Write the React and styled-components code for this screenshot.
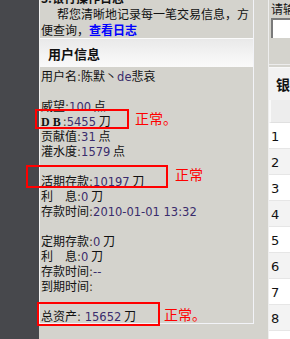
import styled, { createGlobalStyle } from "styled-components";

const GlobalStyle = createGlobalStyle`
  *, *::before, *::after {
    box-sizing: border-box;
  }
  html, body {
    margin: 0;
    padding: 0;
    background: #d4d3cd;
  }
  body {
    font-family: "DejaVu Sans", "Noto Sans CJK SC", sans-serif;
    font-size: 12px;
    color: #111;
  }
`;

const Page = styled.div`
  position: relative;
  display: flex;
  width: 290px;
  height: 339px;
  overflow: hidden;
  background: #d4d3cd;
`;

const Sidebar = styled.div`
  width: 39px;
  flex-shrink: 0;
  background: #47484c;
`;

const Main = styled.div`
  width: 215px;
  flex-shrink: 0;
  display: flex;
  flex-direction: column;
  border-left: 1px solid #f2f2f2;
  border-right: 1px solid #f2f3f8;
  align-self: flex-start;
`;

const Intro = styled.div`
  margin-top: -10px;
  padding-left: 1px;
  line-height: 16px;
`;

const IntroTitle = styled.div`
  font-weight: bold;
  font-family: "Noto Sans CJK SC", sans-serif;
`;

const IntroText = styled.div`
  text-indent: 16px;
  font-family: "Noto Sans CJK SC", sans-serif;
`;

const Link = styled.a`
  color: #0000ff;
  font-weight: bold;
  text-decoration: none;
`;

const Card = styled.div`
  border-top: 1px solid #fbfbfb;
  border-bottom: 1px solid #f2f3f8;
`;

const CardHeader = styled.div`
  height: 28px;
  display: flex;
  align-items: center;
  padding-left: 8px;
  background: linear-gradient(#e9e9e9, #f4f4f4 60%, #fafafa);
  font-family: "Noto Sans CJK SC", sans-serif;
  font-weight: bold;
  font-size: 13px;
  color: #111;
`;

const CardBody = styled.div`
  padding: 1px 0 0 1px;
`;

const Line = styled.div`
  height: 15px;
  line-height: 15px;
  white-space: nowrap;
  font-family: "Noto Sans CJK SC", sans-serif;
`;

const Value = styled.span`
  font-family: "DejaVu Sans", sans-serif;
  font-size: 11.5px;
  color: #3a2c6c;
`;

const Colon = styled.span`
  font-family: "DejaVu Sans", sans-serif;
  color: #4a3a1a;
`;

const Abbr = styled.span`
  font-family: "Liberation Serif", serif;
  font-weight: bold;
  font-size: 12px;
  margin-right: 2px;
`;

const Aside = styled.div`
  flex: 1;
  padding-left: 14px;
  display: flex;
  flex-direction: column;
`;

const AsideInner = styled.div`
  flex: 1;
  border-left: 1px solid #eeeeee;
  display: flex;
  flex-direction: column;
`;

const Search = styled.div`
  height: 65px;
  padding: 1px 0 0 2px;
  border-bottom: 1px solid #ececec;
  font-family: "Noto Sans CJK SC", sans-serif;
  white-space: nowrap;
  overflow: hidden;
`;

const SearchLabel = styled.div`
  line-height: 16px;
`;

const SearchInput = styled.div`
  margin-top: 1px;
  height: 20px;
  background: #fff;
  border-top: 2px solid #7a7a7a;
  border-left: 2px solid #7a7a7a;
`;

const Table = styled.div`
  margin-top: 2px;
  border-top: 1px solid #f8f8f8;
  background: #fff;
  flex: 1;
`;

const TableHead = styled.div`
  height: 32px;
  display: flex;
  align-items: center;
  padding-left: 7px;
  background: #f2f2f2;
  font-family: "Noto Sans CJK SC", sans-serif;
  font-weight: bold;
  font-size: 14px;
  white-space: nowrap;
  overflow: hidden;
`;

const SubHead = styled.div`
  height: 23px;
  background: #ededed;
  border-left: 2px solid #fafafa;
  border-bottom: 1px solid #e0e0e0;
`;

const Row = styled.div`
  height: 26px;
  display: flex;
  align-items: center;
  padding: 2px 0 0 2px;
  border-bottom: 1px solid #e6e6e6;
  background: ${({ $alt }) => ($alt ? "#f3f3f3" : "#ffffff")};
  font-family: "DejaVu Sans", sans-serif;
  font-size: 13px;
  color: #111;
`;

const Box = styled.div`
  position: absolute;
  border: 2px solid #ff0000;
`;

const Note = styled.div`
  position: absolute;
  color: #ff0000;
  font-family: "Noto Sans CJK SC", sans-serif;
  font-size: 14px;
  line-height: 16px;
  white-space: nowrap;
`;

const annotations = [
  { box: [35, 109, 94, 20], note: [135, 110], text: "正常。" },
  { box: [26, 165, 142, 23], note: [175, 166], text: "正常" },
  { box: [37, 302, 123, 24], note: [164, 306], text: "正常。" }
];

const Stat = ({ label, value, unit, children }) => (
  <Line>
    {children || label}
    <Colon>:</Colon>
    <Value>{value}</Value>
    {unit && <> {unit}</>}
  </Line>
);

export default function App() {
  return (
    <>
      <GlobalStyle />
      <Page>
        <Sidebar />
        <Main>
          <Intro>
            <IntroTitle>3.银行操作日志</IntroTitle>
            <IntroText>
              帮您清晰地记录每一笔交易信息，方便查询，<Link href="#">查看日志</Link>
            </IntroText>
          </Intro>
          <Card>
            <CardHeader>用户信息</CardHeader>
            <CardBody>
              <Line>
                用户名<Colon>:</Colon>陈默丶<Value>de</Value>悲哀
              </Line>
              <Line />
              <Stat label="威望" value="100" unit="点" />
              <Stat value="5455" unit="刀">
                <Abbr>D B</Abbr>
              </Stat>
              <Stat label="贡献值" value="31" unit="点" />
              <Stat label="灌水度" value="1579" unit="点" />
              <Line />
              <Stat label="活期存款" value="10197" unit="刀" />
              <Stat label="利　息" value="0" unit="刀" />
              <Stat label="存款时间" value="2010-01-01 13:32" />
              <Line />
              <Stat label="定期存款" value="0" unit="刀" />
              <Stat label="利　息" value="0" unit="刀" />
              <Stat label="存款时间" value="--" />
              <Stat label="到期时间" value="" />
              <Line />
              <Stat label="总资产" value=" 15652" unit="刀" />
            </CardBody>
          </Card>
        </Main>
        <Aside>
          <AsideInner>
            <Search>
              <SearchLabel>请输入银行卡号</SearchLabel>
              <SearchInput />
            </Search>
            <Table>
              <TableHead>银行记录</TableHead>
              <SubHead />
              {[1, 2, 3, 4, 5, 6, 7, 8].map((n) => (
                <Row key={n} $alt={n % 2 === 0}>
                  {n}
                </Row>
              ))}
            </Table>
          </AsideInner>
        </Aside>
        {annotations.map(({ box, note, text }, i) => (
          <div key={i}>
            <Box
              style={{ left: box[0], top: box[1], width: box[2], height: box[3] }}
            />
            <Note style={{ left: note[0], top: note[1] }}>{text}</Note>
          </div>
        ))}
      </Page>
    </>
  );
}
